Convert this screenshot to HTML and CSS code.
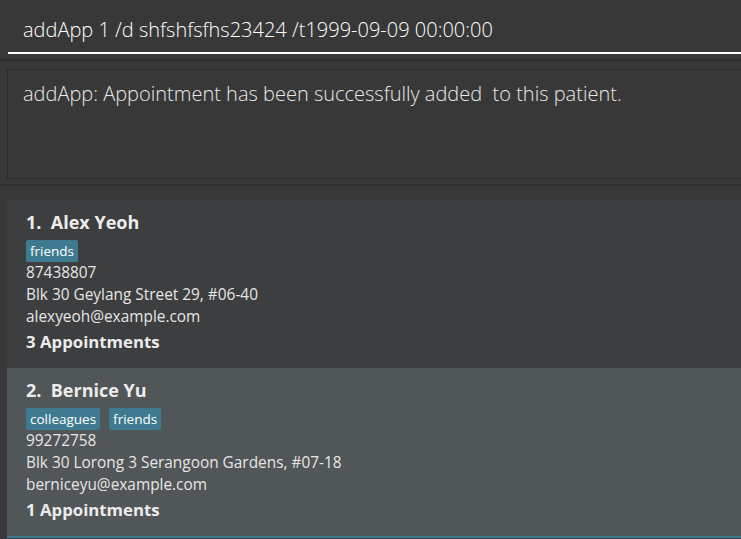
FILE: index.html
```html
<!DOCTYPE html>
<html>
<head>
<meta charset="utf-8">
<link rel="stylesheet" href="styles.css">
</head>
<body>
<div class="app">
  <div class="command-pane">
    <div class="command-field">addApp 1 /d shfshfsfhs23424 /t1999-09-09 00:00:00</div>
  </div>
  <div class="result-pane">
    <div class="result-box">addApp: Appointment has been successfully added&nbsp; to this patient.</div>
  </div>
  <div class="list-pane">
    <div class="card card-even">
      <div class="name">1.&nbsp; Alex Yeoh</div>
      <div class="tags"><span class="tag">friends</span></div>
      <div class="field">87438807</div>
      <div class="field">Blk 30 Geylang Street 29, #06-40</div>
      <div class="field">alexyeoh@example.com</div>
      <div class="appts">3 Appointments</div>
    </div>
    <div class="card card-odd">
      <div class="name">2.&nbsp; Bernice Yu</div>
      <div class="tags"><span class="tag">colleagues</span><span class="tag">friends</span></div>
      <div class="field">99272758</div>
      <div class="field">Blk 30 Lorong 3 Serangoon Gardens, #07-18</div>
      <div class="field">berniceyu@example.com</div>
      <div class="appts">1 Appointments</div>
    </div>
    <div class="card-next"></div>
  </div>
</div>
</body>
</html>
```
FILE: styles.css
```css
html, body {
  margin: 0;
  padding: 0;
  background: #383838;
  overflow: hidden;
}
body {
  width: 741px;
  height: 539px;
  font-family: "Open Sans", "Noto Sans", sans-serif;
}
.app {
  display: flex;
  flex-direction: column;
  height: 539px;
  overflow: hidden;
}
.command-pane {
  height: 61px;
  flex: none;
  border-bottom: 2px solid #2e2e2e;
  box-sizing: border-box;
  padding-left: 8px;
}
.command-field {
  height: 54px;
  box-sizing: border-box;
  border-bottom: 2px solid #ffffff;
  padding: 17px 0 0 15px;
  font-size: 20px;
  font-weight: 300;
  color: #ffffff;
  line-height: 26px;
  white-space: pre;
}
.result-pane {
  height: 125px;
  flex: none;
  box-sizing: border-box;
  padding: 8px 0 0 7px;
  border-bottom: 2px solid #2e2e2e;
}
.result-box {
  height: 110px;
  box-sizing: border-box;
  border: 1px solid #2a2a2a;
  border-right: none;
  padding: 11px 0 0 15px;
  font-size: 20px;
  font-weight: 300;
  color: #e8e8e8;
  line-height: 26px;
  white-space: pre;
}
.list-pane {
  flex: 1;
  min-height: 0;
  overflow: hidden;
  padding: 14px 0 0 7px;
  display: flex;
  flex-direction: column;
}
.card {
  height: 168px;
  flex: none;
  box-sizing: border-box;
  padding: 9px 0 0 19px;
  color: #e6e6e6;
}
.card-even { background: #3c3e3f; }
.card-odd { background: #515658; }
.card-next {
  flex: 1;
  background: #3c3e3f;
  border-top: 2px solid #3e7b91;
}
.name {
  font-size: 18px;
  font-weight: 700;
  line-height: 26px;
  color: #ececec;
}
.tags {
  display: flex;
  gap: 9px;
  margin: 5px 0 0 0;
}
.tag {
  background: #3e7b91;
  color: #ffffff;
  font-size: 13.5px;
  line-height: 22px;
  padding: 0 4px;
  border-radius: 2px;
}
.field {
  font-size: 15.4px;
  line-height: 22px;
  color: #e6e6e6;
}
.appts {
  font-size: 16.8px;
  font-weight: 700;
  line-height: 26px;
  margin-top: 1px;
  color: #ececec;
}
```
